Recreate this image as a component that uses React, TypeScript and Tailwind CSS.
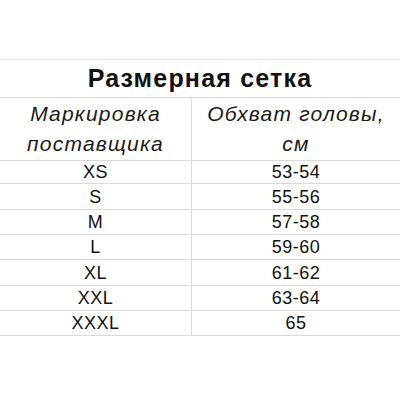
import React from "react";

const rows: { s: string; v: string; h: string }[] = [
  { s: "XS", v: "53-54", h: "h-[22px]" },
  { s: "S", v: "55-56", h: "h-[25px]" },
  { s: "M", v: "57-58", h: "h-[24px]" },
  { s: "L", v: "59-60", h: "h-[24px]" },
  { s: "XL", v: "61-62", h: "h-[25px]" },
  { s: "XXL", v: "63-64", h: "h-[24px]" },
  { s: "XXXL", v: "65", h: "h-[24px]" },
];

export default function App() {
  return (
    <div
      className="w-[400px] h-[400px] bg-white pt-[59px] text-[#111]"
      style={{ fontFamily: '"Liberation Sans", Arial, sans-serif' }}
    >
      <div className="border-t border-[#e6e6e6]">
        <div className="h-[38px] flex items-center justify-center border-b border-[#d9d9d9] text-[25px] tracking-[1.2px] font-bold leading-none">
          Размерная сетка
        </div>
        <div className="grid grid-cols-[192px_1fr] h-[63px] border-b border-[#d9d9d9] italic text-[21px] tracking-[1.2px] leading-[30px] text-[#1a1a1a]">
          <div className="border-r border-[#d9d9d9] flex flex-col items-center justify-center">
            <span>Маркировка</span>
            <span>поставщика</span>
          </div>
          <div className="flex flex-col items-center justify-center">
            <span>Обхват головы,</span>
            <span>см</span>
          </div>
        </div>
        {rows.map((r) => (
          <div
            key={r.s}
            className={`grid grid-cols-[192px_1fr] border-b border-[#d9d9d9] text-[18px] tracking-[0.5px] leading-none box-content ${r.h}`}
          >
            <div className="border-r border-[#d9d9d9] flex items-center justify-center">{r.s}</div>
            <div className="flex items-center justify-center">{r.v}</div>
          </div>
        ))}
      </div>
    </div>
  );
}
